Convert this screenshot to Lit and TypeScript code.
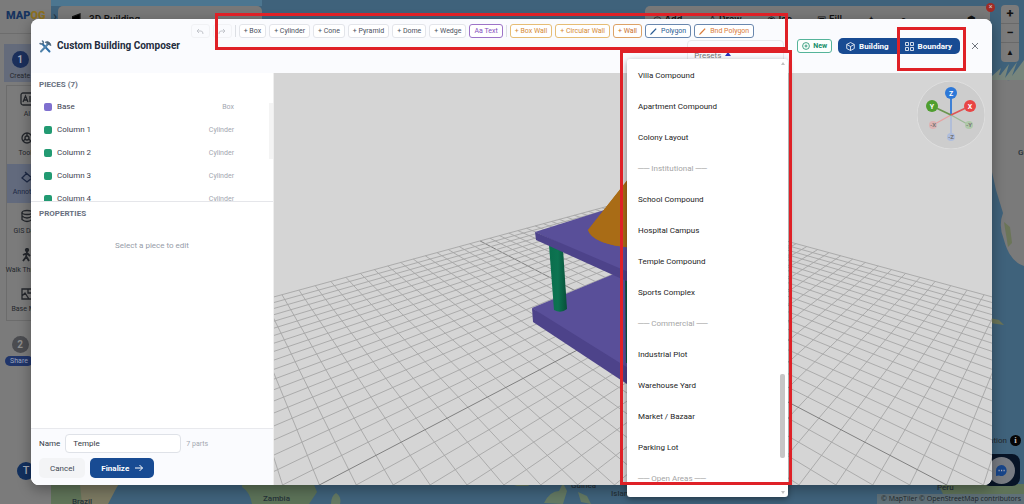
import { LitElement, html, css, svg } from "lit";
import { customElement, state } from "lit/decorators.js";

type Tool = { label: string; kind?: string; pencil?: boolean };

const SOLIDS: Tool[] = [
  { label: "+ Box" }, { label: "+ Cylinder" }, { label: "+ Cone" },
  { label: "+ Pyramid" }, { label: "+ Dome" }, { label: "+ Wedge" },
  { label: "Aa Text", kind: "violet" },
];
const WALLS: Tool[] = [
  { label: "+ Box Wall", kind: "amber" },
  { label: "+ Circular Wall", kind: "amber" },
  { label: "+ Wall", kind: "orange" },
  { label: "Polygon", kind: "blue", pencil: true },
  { label: "Bnd Polygon", kind: "mixed", pencil: true },
];

const PIECES = [
  { name: "Base", type: "Box", color: "#7f70cf" },
  { name: "Column 1", type: "Cylinder", color: "#229a72" },
  { name: "Column 2", type: "Cylinder", color: "#229a72" },
  { name: "Column 3", type: "Cylinder", color: "#229a72" },
  { name: "Column 4", type: "Cylinder", color: "#229a72" },
];

const PRESETS = [
  "Villa Compound", "Apartment Compound", "Colony Layout", "-Institutional",
  "School Compound", "Hospital Campus", "Temple Compound", "Sports Complex",
  "-Commercial", "Industrial Plot", "Warehouse Yard", "Market / Bazaar",
  "Parking Lot", "-Open Areas",
];

/* Ground plane to canvas: a and b run from -1 to 1 along the grid's two sides. */
const project = (a: number, b: number) => {
  const depth = 2.161 + a + b;
  return { x: 359 + (483.6 * (a - b)) / depth, y: -5 + 546.6 / depth };
};

@customElement("scene-view")
class SceneView extends LitElement {
  static styles = css`
    :host { display: block; background: #d5d5d5; position: relative; overflow: hidden; min-width: 0; }
    .scene { display: block; position: absolute; inset: 0; width: 100%; height: 100%; }
    .gizmo { position: absolute; top: 8px; right: 7px; width: 68px; height: 68px; }
    .line { stroke: #a6a6a6; stroke-width: 0.9; }
    .axis { stroke: #808080; stroke-width: 1; }
    .letter { font: 700 7px Roboto, sans-serif; text-anchor: middle; fill: #fff; }
    .faint { fill: #777; font-size: 6px; }
  `;

  gridLines() {
    const out = [];
    for (let i = -20; i <= 20; i++) {
      const t = i / 20;
      const cls = i === 0 ? "axis" : "line";
      const p = project(t, -1), q = project(t, 1);
      const r = project(-1, t), s = project(1, t);
      out.push(svg`<line class=${cls} x1=${p.x} y1=${p.y} x2=${q.x} y2=${q.y}></line>
        <line class=${cls} x1=${r.x} y1=${r.y} x2=${s.x} y2=${s.y}></line>`);
    }
    return out;
  }

  render() {
    return html`
      <svg class="scene" viewBox="0 0 718 412" preserveAspectRatio="xMidYMid slice" role="img" aria-label="Temple model on a grid">
        <defs>
          <linearGradient id="col"><stop offset="0" stop-color="#0b6e4d"/><stop offset=".5" stop-color="#0d7451"/><stop offset="1" stop-color="#084f39"/></linearGradient>
          <linearGradient id="cone"><stop offset="0" stop-color="#a0661a"/><stop offset=".5" stop-color="#ab6d12"/><stop offset="1" stop-color="#8a5510"/></linearGradient>
        </defs>
        ${this.gridLines()}
        <polygon points="258,235 359,193 460,235 359,310" fill="#594f99"/>
        <polygon points="258,235 359,298 359,315 259,249" fill="#4d438a"/>
        <polygon points="460,235 359,298 359,315 459,249" fill="#483f80"/>
        <path d="M275 172 L289 176 L293 236 Q287 241 280 237 Z" fill="url(#col)"/>
        <path d="M351 200 L366 200 L364 290 L352 290 Z" fill="#0b5a44"/>
        <polygon points="261,159 359,128 457,159 359,204" fill="#594f99"/>
        <polygon points="261,159 359,201 359,211 262,167" fill="#4d438a"/>
        <polygon points="457,159 359,201 359,211 456,167" fill="#483f80"/>
        <path d="M359 100 L314 157 Q318 171 359 175 Q400 171 404 157 Z" fill="url(#cone)"/>
        <path d="M359 100 L314 157 Q318 171 359 175 Z" fill="#a96c16"/>
      </svg>
      <svg class="gizmo" viewBox="0 0 68 68" aria-hidden="true">
        <circle cx="34" cy="34" r="34" fill="#cdcdcd" stroke="#dedede"/>
        <g stroke-width="1.3" fill="none">
          <path d="M34 34L16 44" stroke="#e5a0a0"/><path d="M34 34L52 44" stroke="#9ab995"/><path d="M34 34V56" stroke="#a2b5dd"/>
        </g>
        <g stroke-width="1.8"><path d="M34 34V12" stroke="#2f78d6"/><path d="M34 34L15 25" stroke="#6a964f"/><path d="M34 34L53 25" stroke="#dd5656"/></g>
        <circle cx="16" cy="44" r="4" fill="#dcb3b3"/><circle cx="52" cy="44" r="4" fill="#afc8a9"/><circle cx="34" cy="56" r="4" fill="#aebddd"/>
        <circle cx="34" cy="12" r="6" fill="#2d78d8"/><circle cx="15" cy="25" r="6" fill="#4f9e2f"/><circle cx="53" cy="25" r="6" fill="#e84545"/>
        <text class="letter" x="34" y="14.5">Z</text><text class="letter" x="15" y="27.5">Y</text><text class="letter" x="53" y="27.5">X</text>
        <text class="letter faint" x="16" y="46">-X</text><text class="letter faint" x="52" y="46">-Y</text><text class="letter faint" x="34" y="58">-Z</text>
      </svg>`;
  }
}

@customElement("map-page")
class MapPage extends LitElement {
  static styles = css`
    :host { display: flex; height: 100%; background: #3f627b; position: relative; overflow: hidden; color: #24272c; font: 8px/10px Roboto, sans-serif; }
    .map { position: absolute; inset: 0; width: 100%; height: 100%; }
    .place { font: 500 8px Roboto, sans-serif; fill: #26323a; }
    .rail { position: relative; width: 51px; flex: none; background: #7b7b7b; overflow: hidden; }
    .logo { height: 34px; box-sizing: border-box; padding: 8px 0 0 6px; border-bottom: 1px solid #6d6d6d; font: 900 11px/16px Roboto, sans-serif; color: #17345f; white-space: nowrap; }
    .gold { color: #8d701f; }
    .step { margin: 10px 0 0 4px; height: 38px; padding-top: 7px; background: #646b7b; text-align: center; width: 48px; box-sizing: border-box; padding-right: 16px; font-size: 7px; }
    .num { display: block; width: 17px; height: 17px; margin: 0 auto 3px; border-radius: 50%; background: #1b2f5b; color: #9fa6b4; font: 700 10px/17px Roboto, sans-serif; }
    .num.off { background: #4b4c50; color: #8d8d8d; }
    .items { margin: 3px 0 0 6px; border: 1px solid #6c6c6c; border-right: 0; display: flex; flex-direction: column; }
    .item { height: 39px; box-sizing: border-box; padding: 6px 0 0 0; width: 40px; text-align: center; white-space: nowrap; display: flex; flex-direction: column; align-items: center; gap: 3px; font-size: 7px; line-height: 10px; }
    .item.on { background: #626a7d; color: #1d2944; }
    .icon { width: 14px; height: 14px; flex: none; fill: none; stroke: currentColor; stroke-width: 1.3; }
    .share { margin: 15px 0 0 5px; width: 30px; text-align: center; font-size: 7px; }
    .pill { display: block; width: 28px; border-radius: 5px; background: #20356a; color: #9aa5bf; }
    .user { position: absolute; left: 17px; bottom: 24px; width: 18px; height: 18px; border-radius: 50%; background: #12305e; color: #a3aab8; font: 500 11px/18px Roboto, sans-serif; text-align: center; }
    .bar { position: absolute; top: 6px; height: 30px; border-radius: 5px; background: #787878; display: flex; gap: 7px; padding: 7px 14px; box-sizing: border-box; font: 500 10px/14px Roboto, sans-serif; color: #111; }
    .left { left: 58px; width: 204px; }
    .right { left: 645px; right: 34px; justify-content: space-between; padding-left: 8px; }
    .bar .icon { width: 10px; height: 12px; }
    .caret { position: absolute; left: 53px; top: 8px; font-size: 14px; line-height: 16px; color: #253440; }
    .alert { position: absolute; right: 29px; top: 3px; width: 9px; height: 9px; border-radius: 50%; background: #a12b25; color: #ccc; font: 7px/9px Roboto, sans-serif; text-align: center; }
    .zoom { position: absolute; right: 5px; top: 5px; width: 18px; border-radius: 4px; background: #7b7b7b; display: flex; flex-direction: column; }
    .zoom button { height: 19px; padding: 0; border: 0; background: none; border-bottom: 1px solid #696969; font: 700 13px/18px Roboto, sans-serif; color: #111; }
    .zoom button:last-child { border: 0; font-size: 8px; }
    .credit { position: absolute; right: 0; bottom: 0; padding: 0 3px 0 4px; background: #5f7078; font: 7px/10px "Open Sans", sans-serif; color: #20272c; }
    .credit a { color: inherit; text-decoration: none; }
    .chat { position: absolute; right: 4px; bottom: 18px; width: 38px; height: 32px; border: 0; padding: 0 5px 0 0; border-radius: 8px; background: #071426; display: flex; justify-content: flex-end; align-items: center; }
    .face { width: 27px; height: 27px; display: block; }
    .info { position: absolute; right: 3px; bottom: 58px; display: flex; gap: 3px; align-items: center; font-size: 8px; }
    .i { width: 11px; height: 11px; border-radius: 50%; background: #050505; color: #bbb; font: 700 9px/11px "Liberation Serif", serif; text-align: center; }
  `;

  item(label: string, icon: unknown, on = false) {
    return html`<div class="item ${on ? "on" : ""}"><svg class="icon" viewBox="0 0 14 14">${icon}</svg>${label}</div>`;
  }

  render() {
    return html`
      <svg class="map" viewBox="0 0 1024 504" preserveAspectRatio="none" aria-hidden="true">
        <path d="M0 0H262V6H0Z" fill="#4c7690"/>
        <path d="M992 80Q998 70 1004 78T1024 66V266Q1010 262 1004 240Q998 226 1003 213L996 190L992 172Z" fill="#7a7a7a"/>
        <path d="M992 76L1001 68L998 78L1009 64L1005 78L1017 62L1012 76L1024 60V80H992Z" fill="#77857c"/>
        <path d="M1004 222l6 5 2 16-4 4zM990 318l9 2 5 5-14-2z" fill="#6b7558"/>
        <path d="M51 482H122L112 491L108 504H51Z" fill="#5f7358"/>
        <path d="M80 485Q104 480 118 485L108 504H82Z" fill="#7a7861"/>
        <path d="M242 482H313L317 492L309 504H252Q250 492 242 487Z" fill="#5c7258"/>
        <path d="M336 493q6 4 4 11h-9q0-8 5-11zM514 486l12-4 3 4zM544 503q6-12 15-12l4-8 4 8-4 13zM578 492l9 4 4 8-10-2z" fill="#647963"/>
        <path d="M938 484H1024V504H948Z" fill="#5f7358"/>
        <text class="place" x="72" y="504">Brazil</text><text class="place" x="263" y="501">Zambia</text>
        <text class="place" x="571" y="488">Guinea</text><text class="place" x="611" y="496">Islands</text>
        <text class="place" x="937" y="490">Peru</text><text class="place" x="1018" y="155">Gu</text>
      </svg>
      <nav class="rail">
        <div class="logo">MAP<span class="gold">OG</span></div>
        <div class="step"><span class="num">1</span>Create</div>
        <div class="items">
          ${this.item("AI", svg`<rect x="1" y="1" width="12" height="12" rx="2"/><path d="M3 10L5.500 4L8 10M4 8h3M10 4v6"/>`)}
          ${this.item("Tools", svg`<circle cx="7" cy="7" r="5"/><circle cx="7" cy="7" r="2"/><path d="M7 2v3M3 10l2.500-2M11 10L8.500 8"/>`)}
          ${this.item("Annotate", svg`<path d="M5 2L12 8L7 12L2 8L7 3M11 10q3 3 0 3"/>`, true)}
          ${this.item("GIS Data", svg`<ellipse cx="7" cy="3.500" rx="5" ry="2"/><path d="M2 3.500v7q5 4 10 0v-7M2 7q5 4 10 0"/>`)}
          ${this.item("Walk Through", svg`<circle cx="7" cy="2" r="1.500" fill="currentColor"/><path d="M7 4L6 9L3 13M6 8L9 13M7 5L3 7M7 5L10 8M12 9v4" stroke-width="1.800"/>`)}
          ${this.item("Base Map", svg`<path d="M2 2h10v10H2zM2 9l3-3 4 6M8 2v4h4"/>`)}
        </div>
        <div class="share"><span class="num off">2</span><span class="pill">Share</span></div>
        <div class="user">T</div>
      </nav>
      <span class="caret">›</span>
      <div class="bar left"><svg class="icon" viewBox="0 0 10 12"><path d="M0 4L8 1V10L0 8Z" fill="#000"/></svg>3D Building</div>
      <div class="bar right"><span>◎ Add</span><span>♙ Draw</span><span>◉ Ico</span><span>▣ Fill</span><span>✦</span><span>●</span><span>▬</span><span>⬢</span></div>
      <span class="alert">×</span>
      <div class="zoom"><button aria-label="Zoom in">+</button><button aria-label="Zoom out">−</button><button aria-label="North">▲</button></div>
      <div class="info">ation <span class="i">i</span></div>
      <button class="chat" aria-label="Chat"><svg class="face" viewBox="0 0 27 27"><circle cx="13.500" cy="13.500" r="13.500" fill="#777b82"/><path d="M13.500 8a5.500 5.500 0 1 1-2.500 10.500L8 19V13.500A5.500 5.500 0 0 1 13.500 8Z" fill="#17458a"/><path d="M10.500 13.500h1.200M13 13.500h1.200M15.500 13.500h1.200" stroke="#aab" stroke-width="1.300"/></svg></button>
      <div class="credit"><a href="#maptiler">© MapTiler</a> <a href="#osm">© OpenStreetMap contributors</a></div>
    `;
  }
}

@customElement("app-root")
class AppRoot extends LitElement {
  @state() name = "Temple";

  static styles = css`
    :host { display: block; position: relative; height: 100vh; overflow: hidden; font-family: Roboto, sans-serif; color: #343a46; }
    * { box-sizing: border-box; }
    button, input, select { font-family: inherit; }
    .overlay { position: absolute; inset: 0; padding: 19px 32px 19px 31px; display: flex; }
    .dialog { flex: 1; min-width: 0; display: flex; flex-direction: column; background: #fff; border-radius: 8px; overflow: hidden; box-shadow: 0 4px 14px #0005; }
    .head { height: 54px; flex: none; display: flex; align-items: center; background: #fafbfe; padding: 0 13px 0 8px; }
    .head > * { flex: none; }
    .head > .title { display: flex; align-items: center; gap: 5px; margin: 0; font: 700 10px/16px Roboto, sans-serif; color: #232c3d; white-space: nowrap; flex: 1 1 0; }
    .tools-icon { width: 13px; height: 13px; flex: none; }
    .center { align-self: stretch; display: flex; flex-direction: column; align-items: flex-end; gap: 2px; padding-top: 5px; margin-right: 13px; }
    .tools { display: flex; gap: 3px; align-items: center; margin-right: 30px; }
    .tool { height: 14px; padding: 0 4px; border: 1px solid #e3e5ea; border-radius: 3px; background: #fff; font-size: 7px; line-height: 12px; color: #4b5160; white-space: nowrap; display: flex; align-items: center; gap: 4px; }
    .ghost { width: 19px; padding: 0; justify-content: center; color: #c3c6cc; background: #fafbfe; border-color: #f1f2f5; }
    .rule { width: 1px; height: 12px; background: #dcdfe4; }
    .violet { color: #8550c0; border-color: #9d73c8; }
    .amber { color: #d58a35; border-color: #e6bd75; }
    .orange { color: #ca6f2d; border-color: #dca267; }
    .blue { color: #2a5c94; border-color: #6987ae; }
    .mixed { color: #da7d3c; border-color: #6987ae; }
    .pen { width: 7px; height: 7px; }
    .preset { position: relative; width: 97px; height: 32px; border: 1px solid #e7e8eb; border-radius: 4px; display: block; color: #818181; }
    .preset select { appearance: none; display: block; width: 100%; height: 28px; border: 0; padding: 0 6px; background: none; font-size: 8px; color: #777; }
    .tri { position: absolute; left: 37px; top: 11px; border: 3px solid transparent; border-top: 0; border-bottom: 4px solid #2933b8; }
    .new { height: 14px; border: 1px solid #55b49a; border-radius: 3px; background: #fbfffd; color: #158e69; font-weight: 700; font-size: 7px; padding: 0 4px; display: flex; align-items: center; gap: 3px; margin-right: 6px; }
    .new svg { width: 8px; height: 8px; }
    .modes { display: flex; border-radius: 5px; overflow: hidden; background: #184b93; margin-right: 11px; }
    .mode { height: 16px; border: 0; padding: 0 8px; background: none; color: #fff; font-size: 8px; font-weight: 700; display: flex; align-items: center; gap: 4px; }
    .mode svg { width: 9px; height: 9px; }
    .close { width: 8px; height: 8px; padding: 0; border: 0; background: none; display: block; }
    .close svg { display: block; width: 8px; height: 8px; }
    .body { flex: 1; min-height: 0; display: flex; }
    .side { width: 243px; flex: none; display: flex; flex-direction: column; background: #fff; border-right: 1px solid #eee; }
    scene-view { flex: 1; }
    .pieces { height: 129px; overflow: hidden; border-bottom: 1px solid #e5e6ea; display: grid; grid-template-columns: 1fr 4px; grid-template-rows: 22px 106px; column-gap: 0; }
    .cap { margin: 0; padding: 5px 0 0 8px; font: 700 8px/14px Roboto, sans-serif; color: #686f7e; }
    .pieces .cap { grid-column: 1 / 3; }
    .list { margin: 0; padding: 0; list-style: none; overflow: hidden; }
    .piece { height: 23px; display: flex; align-items: center; gap: 5px; padding: 0 35px 0 13px; font-size: 8px; line-height: 12px; color: #3b4250; }
    .dot { width: 8px; height: 8px; border-radius: 2px; }
    .type { margin-left: auto; color: #a2a6af; font-size: 7px; }
    .track { background: #f4f4f4; height: 56px; margin-top: 8px; }
    .empty { margin: 18px 0 0; text-align: center; font-size: 8px; line-height: 14px; color: #969ca8; }
    .foot { margin-top: auto; height: 57px; border-top: 1px solid #e8e9ed; background: #fafbfe; padding: 5px 8px 0; display: flex; flex-direction: column; gap: 5px; }
    .row { display: flex; align-items: center; gap: 5px; font-size: 8px; }
    .name { width: 116px; height: 19px; padding: 0 7px; border: 1px solid #dfe2e8; border-radius: 4px; background: #fff; font-size: 8px; color: #343a46; }
    .count { color: #a3a7b0; font-size: 7px; }
    .btn { height: 20px; border: 0; border-radius: 5px; font-size: 8px; background: #f3f4f6; color: #414754; padding: 0 11px; display: flex; align-items: center; gap: 6px; }
    .primary { background: #184b93; color: #fff; font-weight: 700; }
    .btn svg { width: 8px; height: 8px; }
    .menu { position: absolute; left: 627px; top: 59px; bottom: 7px; width: 161px; background: #fff; border-radius: 3px; box-shadow: 0 2px 6px #0006; display: flex; overflow: hidden; }
    .options { flex: 1; margin: 0; padding: 1px 0 0; list-style: none; overflow: hidden; }
    .option { height: 31px; padding: 0 11px; font-size: 8px; line-height: 31px; color: #242424; white-space: nowrap; }
    .group { color: #a5a5a5; }
    .scroll { width: 11px; padding: 3px 0; display: flex; flex-direction: column; align-items: center; }
    .up { border: 2px solid transparent; border-top: 0; border-bottom: 3px solid #c2c2c2; }
    .thumb { width: 5px; height: 84px; margin: auto 0 33px; background: #c6c6c6; border-radius: 2px; }
    .down { border: 2px solid transparent; border-bottom: 0; border-top: 3px solid #c2c2c2; }
    .mark { position: absolute; border: 3px solid #df2127; pointer-events: none; }
    .mark.tools-mark { left: 215px; top: 13px; width: 573px; height: 37px; }
    .mark.menu-mark { left: 620px; top: 50px; width: 172px; height: 435px; }
    .mark.mode-mark { left: 897px; top: 27px; width: 69px; height: 44px; }
  `;

  tool(t: Tool) {
    return html`<button class="tool ${t.kind ?? ""}">
      ${t.pencil ? html`<svg class="pen" viewBox="0 0 7 7"><path d="M0 7L.8 5.300L5.700.2L6.600 1.100L1.700 6.200Z" fill="currentColor"/></svg>` : ""}${t.label}</button>`;
  }

  render() {
    return html`
      <map-page></map-page>
      <div class="overlay">
        <section class="dialog" role="dialog" aria-label="Custom Building Composer">
          <header class="head">
            <h1 class="title">
              <svg class="tools-icon" viewBox="0 0 13 13" fill="none" stroke-linecap="round">
                <path d="M3.500 4L10.500 11.500" stroke="#2f6fa8" stroke-width="2"/>
                <path d="M1 3.500Q3 4.500 4 3.500T3.500 1" stroke="#56748e" stroke-width="1.500"/>
                <path d="M9 4L2 11.500" stroke="#5484aa" stroke-width="2"/>
                <path d="M6.500 2Q9 .5 11 3L12 5.500L9.500 4.500Z" fill="#4a657c" stroke="#4a657c" stroke-width=".8"/>
              </svg>Custom Building Composer</h1>
            <div class="center">
              <div class="tools">
                <button class="tool ghost" aria-label="Undo"><svg width="8" height="7" viewBox="0 0 8 7" fill="none" stroke="currentColor"><path d="M3 1L1 3L3 5M1 3H5Q7 3 7 6"/></svg></button>
                <button class="tool ghost" aria-label="Redo"><svg width="8" height="7" viewBox="0 0 8 7" fill="none" stroke="currentColor"><path d="M5 1L7 3L5 5M7 3H3Q1 3 1 6"/></svg></button>
                <span class="rule"></span>
                ${SOLIDS.map((t) => this.tool(t))}
                <span class="rule"></span>
                ${WALLS.map((t) => this.tool(t))}
              </div>
              <label class="preset"><select aria-label="Presets"><option>Presets</option></select><span class="tri"></span></label>
            </div>
            <button class="new"><svg viewBox="0 0 8 8" fill="none" stroke="currentColor" stroke-width=".8"><circle cx="4" cy="4" r="3.400"/><path d="M4 2.500v3M2.500 4h3"/></svg>New</button>
            <div class="modes">
              <button class="mode"><svg viewBox="0 0 9 9" fill="none" stroke="currentColor" stroke-width=".8"><path d="M4.500.5L8.300 2.500V6.500L4.500 8.500L.7 6.500V2.500ZM.7 2.500L4.500 4.500L8.300 2.500M4.500 4.500V8.500"/></svg>Building</button>
              <button class="mode"><svg viewBox="0 0 9 9" fill="none" stroke="currentColor" stroke-width=".8"><path d="M.5.5h3v3h-3zM5.500.5h3v3h-3zM.5 5.500h3v3h-3zM5.500 5.500h3v3h-3z"/></svg>Boundary</button>
            </div>
            <button class="close" aria-label="Close"><svg viewBox="0 0 8 8" stroke="#70757e"><path d="M1 1L7 7M7 1L1 7"/></svg></button>
          </header>
          <div class="body">
            <aside class="side">
              <div class="pieces">
                <h2 class="cap">PIECES (7)</h2>
                <ul class="list">
                  ${PIECES.map((p) => html`<li class="piece"><span class="dot" style="background:${p.color}"></span>${p.name}<span class="type">${p.type}</span></li>`)}
                </ul>
                <div class="track"></div>
              </div>
              <h2 class="cap">PROPERTIES</h2>
              <p class="empty">Select a piece to edit</p>
              <div class="foot">
                <div class="row">
                  <label for="name">Name</label>
                  <input class="name" id="name" .value=${this.name} @input=${(e: Event) => (this.name = (e.target as HTMLInputElement).value)} />
                  <span class="count">7 parts</span>
                </div>
                <div class="row">
                  <button class="btn">Cancel</button>
                  <button class="btn primary">Finalize <svg viewBox="0 0 8 8" fill="none" stroke="currentColor"><path d="M0 4H7.500M4.500 1L7.500 4L4.500 7"/></svg></button>
                </div>
              </div>
            </aside>
            <scene-view></scene-view>
          </div>
        </section>
      </div>
      <div class="menu">
        <ul class="options" role="listbox" aria-label="Presets">
          ${PRESETS.map((p) => p.startsWith("-")
            ? html`<li class="option group" role="presentation">── ${p.slice(1)} ──</li>`
            : html`<li class="option" role="option">${p}</li>`)}
        </ul>
        <div class="scroll"><span class="up"></span><span class="thumb"></span><span class="down"></span></div>
      </div>
      <div class="mark tools-mark"></div>
      <div class="mark menu-mark"></div>
      <div class="mark mode-mark"></div>
    `;
  }
}
